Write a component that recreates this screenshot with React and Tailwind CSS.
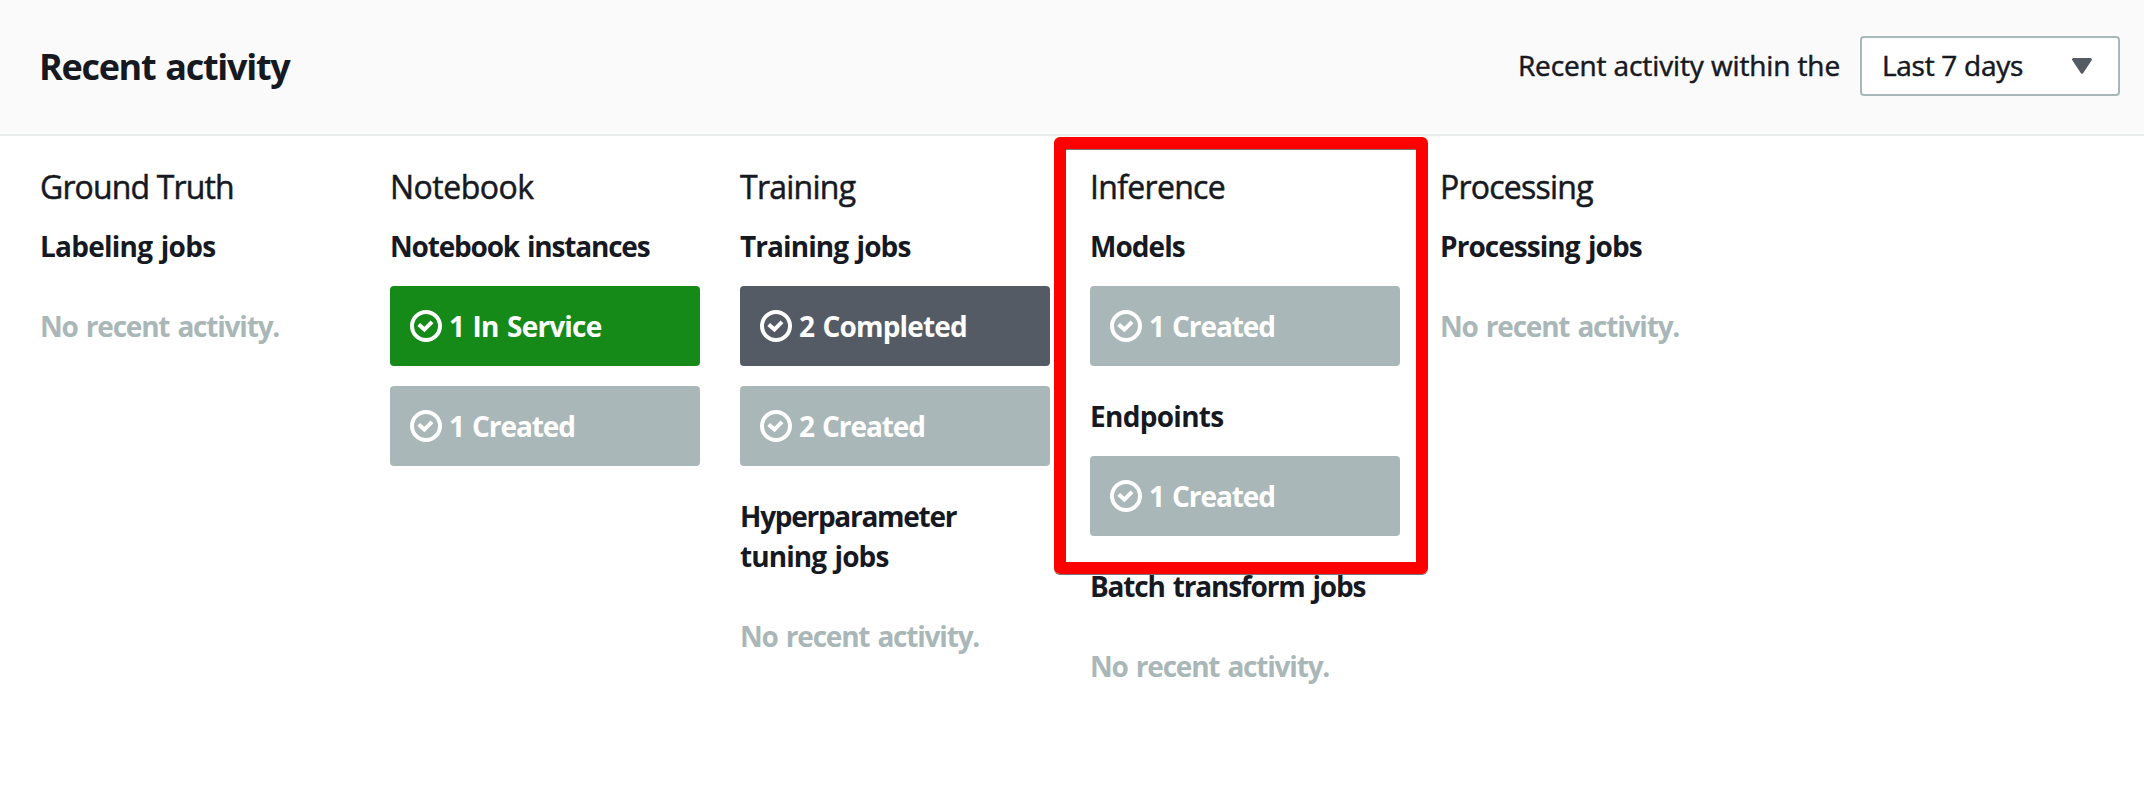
import React from "react";

function CheckCircle() {
  return (
    <svg className="size-8 shrink-0" viewBox="0 0 32 32" fill="none" stroke="currentColor" strokeWidth="4">
      <circle cx="16" cy="16" r="14" />
      <path d="M8.7 14.4 14.4 19.6 22 11.9" />
    </svg>
  );
}

function Status({ color, spacing, children }) {
  return (
    <div className={`flex h-20 w-[310px] items-center gap-[7px] rounded-[4px] px-5 text-white ${color}`}>
      <CheckCircle />
      <span className={`font-bold [word-spacing:2px] ${spacing}`}>{children}</span>
    </div>
  );
}

function Empty() {
  return (
    <p className="flex h-20 items-center font-bold tracking-[-1.2px] text-[#aab7b8] [word-spacing:2px]">
      No recent activity.
    </p>
  );
}

function Group({ title, spacing, children }) {
  return (
    <section>
      <h3 className={`mb-5 w-[250px] whitespace-nowrap font-bold [word-spacing:2px] ${spacing}`}>{title}</h3>
      <div className="flex flex-col gap-5">{children}</div>
    </section>
  );
}

function Column({ title, spacing, children }) {
  return (
    <div className="w-[310px]">
      <h2 className={`mb-[19px] text-[32px] leading-10 [-webkit-text-stroke:0.5px_#16191f] ${spacing}`}>{title}</h2>
      <div className="flex flex-col gap-[30px]">{children}</div>
    </div>
  );
}

const GREY = "bg-[#aab7b8]";
const SLATE = "bg-[#545b64]";
const GREEN = "bg-[#168a18]";

export default function App() {
  return (
    <div className="h-[790px] w-[2144px] overflow-hidden bg-white font-['Open_Sans','Noto_Sans',sans-serif] text-[28px] leading-10 text-[#16191f]">
      <header className="flex h-[136px] items-center justify-between border-b-2 border-[#eaeded] bg-[#fafafa] pb-0.5 pl-[39px] pr-6">
        <h1 className="pt-0.5 text-[36px] font-bold tracking-[-1.3px] [word-spacing:2px]">Recent activity</h1>
        <div className="flex items-center gap-5">
          <span className="pb-0.5 tracking-[-0.12px] [-webkit-text-stroke:0.5px_#16191f]">Recent activity within the</span>
          <button className="flex h-[60px] w-[260px] items-center justify-between rounded-[4px] border-2 border-[#aab7b8] bg-white pl-5 pr-[26px]">
            <span className="pb-0.5 tracking-[-0.28px] [-webkit-text-stroke:0.5px_#16191f]">Last 7 days</span>
            <svg className="h-4 w-5" viewBox="0 0 20 16" fill="#545b64" stroke="#545b64" strokeWidth="3" strokeLinejoin="round">
              <path d="M1.6 1.5H18.4L10 14.3Z" />
            </svg>
          </button>
        </div>
      </header>

      <main className="relative flex gap-10 px-10 pt-[31px]">
        <Column title="Ground Truth" spacing="tracking-[-0.86px]">
          <Group title="Labeling jobs" spacing="tracking-[-0.75px]">
            <Empty />
          </Group>
        </Column>

        <Column title="Notebook" spacing="tracking-[-0.5px]">
          <Group title="Notebook instances" spacing="tracking-[-1.2px]">
            <Status color={GREEN} spacing="tracking-[-0.83px]">1 In Service</Status>
            <Status color={GREY} spacing="tracking-[-1.1px]">1 Created</Status>
          </Group>
        </Column>

        <Column title="Training" spacing="tracking-[-0.74px]">
          <Group title="Training jobs" spacing="tracking-[-0.92px]">
            <Status color={SLATE} spacing="tracking-[-0.85px]">2 Completed</Status>
            <Status color={GREY} spacing="tracking-[-1.1px]">2 Created</Status>
          </Group>
          <Group
            title={
              <>
                <span className="tracking-[-1.28px]">Hyperparameter</span>
                <br />
                tuning jobs
              </>
            }
            spacing="tracking-[-0.92px]"
          >
            <Empty />
          </Group>
        </Column>

        <Column title="Inference" spacing="tracking-[-0.7px]">
          <Group title="Models" spacing="tracking-[-0.96px]">
            <Status color={GREY} spacing="tracking-[-1.1px]">1 Created</Status>
          </Group>
          <Group title="Endpoints" spacing="tracking-[-0.71px]">
            <Status color={GREY} spacing="tracking-[-1.1px]">1 Created</Status>
          </Group>
          <Group title="Batch transform jobs" spacing="tracking-[-1.2px]">
            <Empty />
          </Group>
        </Column>

        <Column title="Processing" spacing="tracking-[-0.76px]">
          <Group title="Processing jobs" spacing="tracking-[-0.95px]">
            <Empty />
          </Group>
        </Column>

        {/* Highlight frame over the Inference column */}
        <div className="pointer-events-none absolute left-[1054px] top-px h-[437px] w-[374px] rounded-[6px] border-12 border-[#ff0000] shadow-[0_1px_0_#777,inset_0_1px_0_#777]" />
      </main>
    </div>
  );
}
